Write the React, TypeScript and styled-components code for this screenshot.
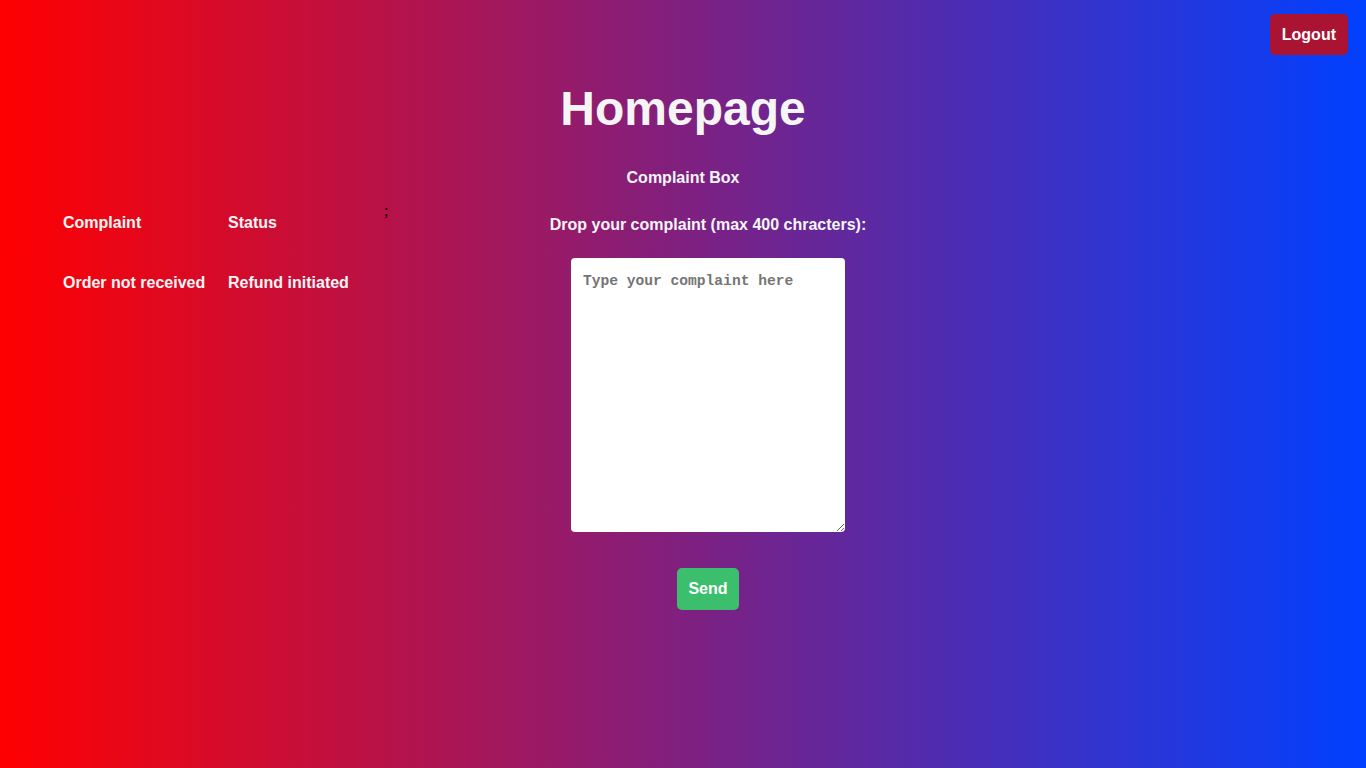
import React, { useState } from 'react';
import styled, { createGlobalStyle } from 'styled-components';

const GlobalStyle = createGlobalStyle`
  html, body {
    margin: 0;
    padding: 0;
  }
  body {
    min-height: 768px;
    background: linear-gradient(to right, #ff0000, #0040ff);
    font-family: "Liberation Sans", Arial, sans-serif;
  }
`;

const Page = styled.div`
  min-height: 768px;
  color: #f5f5f5;
`;

const TopBar = styled.div`
  display: flex;
  justify-content: flex-end;
  padding: 14px 18px 0 0;
`;

const LogoutButton = styled.button`
  background-color: #aa1331;
  color: #ffffff;
  border: none;
  border-radius: 5px;
  height: 41px;
  padding: 0 12px;
  font-family: "Liberation Sans", Arial, sans-serif;
  font-size: 16px;
  font-weight: bold;
  cursor: pointer;
`;

const Title = styled.h1`
  margin: 26px 0 0;
  text-align: center;
  font-size: 48px;
  line-height: 56px;
  font-weight: bold;
`;

const SubTitle = styled.h3`
  margin: 32px 0 0;
  text-align: center;
  font-size: 16px;
  line-height: 18px;
  font-weight: bold;
`;

const Content = styled.div`
  display: flex;
  align-items: flex-start;
  margin-top: 14px;
`;

const LeftPanel = styled.div`
  width: 528px;
  box-sizing: border-box;
  padding-left: 63px;
  display: flex;
  align-items: flex-start;
`;

const Table = styled.div`
  display: grid;
  grid-template-columns: 165px auto;
  row-gap: 42px;
  padding-top: 13px;
`;

const Cell = styled.div`
  font-size: 16px;
  line-height: 18px;
  font-weight: bold;
  white-space: nowrap;
`;

const Stray = styled.span`
  margin-left: 35px;
  margin-top: 1px;
  color: #000;
  font-family: "Liberation Serif", serif;
  font-size: 16px;
`;

const FormPanel = styled.form`
  width: 360px;
  display: flex;
  flex-direction: column;
  align-items: center;
`;

const Label = styled.label`
  margin-top: 15px;
  font-size: 16px;
  line-height: 18px;
  font-weight: bold;
  white-space: nowrap;
`;

const TextArea = styled.textarea`
  margin-top: 24px;
  width: 274px;
  height: 274px;
  box-sizing: border-box;
  border: none;
  border-radius: 4px;
  padding: 15px 12px 12px;
  background: #fff;
  font-family: "Liberation Mono", "DejaVu Sans Mono", monospace;
  font-size: 14.6px;
  font-weight: bold;
  color: #222;
  outline: none;
  &::placeholder {
    color: #757575;
  }
`;

const SendButton = styled.button`
  margin-top: 36px;
  background-color: #3cbf6c;
  color: #fff;
  border: none;
  border-radius: 5px;
  height: 42px;
  padding: 0 11px;
  font-family: "Liberation Sans", Arial, sans-serif;
  font-size: 16px;
  font-weight: bold;
  cursor: pointer;
`;

const complaints = [{ text: 'Order not received', status: 'Refund initiated' }];

const App: React.FC = () => {
  const [complaint, setComplaint] = useState('');

  return (
    <>
      <GlobalStyle />
      <Page>
        <TopBar>
          <LogoutButton>Logout</LogoutButton>
        </TopBar>
        <Title>Homepage</Title>
        <SubTitle>Complaint Box</SubTitle>
        <Content>
          <LeftPanel>
            <Table>
              <Cell>Complaint</Cell>
              <Cell>Status</Cell>
              {complaints.map(c => (
                <React.Fragment key={c.text}>
                  <Cell>{c.text}</Cell>
                  <Cell>{c.status}</Cell>
                </React.Fragment>
              ))}
            </Table>
            <Stray>;</Stray>
          </LeftPanel>
          <FormPanel onSubmit={e => e.preventDefault()}>
            <Label htmlFor="complaint">Drop your complaint (max 400 chracters):</Label>
            <TextArea
              id="complaint"
              maxLength={400}
              placeholder="Type your complaint here"
              value={complaint}
              onChange={e => setComplaint(e.target.value)}
            />
            <SendButton type="submit">Send</SendButton>
          </FormPanel>
        </Content>
      </Page>
    </>
  );
};

export default App;
